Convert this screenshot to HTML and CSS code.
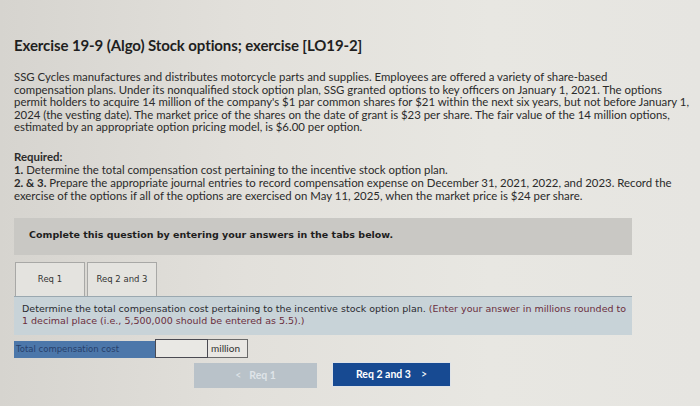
FILE: index.html
```html
<!DOCTYPE html>
<html>
<head>
<meta charset="utf-8">
<link rel="stylesheet" href="styles.css">
</head>
<body>
<div class="page">
  <h1 class="title">Exercise 19-9 (Algo) Stock options; exercise [LO19-2]</h1>
  <p class="intro">SSG Cycles manufactures and distributes motorcycle parts and supplies. Employees are offered a variety of share-based<br>compensation plans. Under its nonqualified stock option plan, SSG granted options to key officers on January 1, 2021. The options<br>permit holders to acquire 14 million of the company's $1 par common shares for $21 within the next six years, but not before January 1,<br>2024 (the vesting date). The market price of the shares on the date of grant is $23 per share. The fair value of the 14 million options,<br>estimated by an appropriate option pricing model, is $6.00 per option.</p>
  <div class="required">
    <div class="req-head">Required:</div>
    <div><b>1.</b> Determine the total compensation cost pertaining to the incentive stock option plan.</div>
    <div><b>2. &amp; 3.</b> Prepare the appropriate journal entries to record compensation expense on December 31, 2021, 2022, and 2023. Record the<br>exercise of the options if all of the options are exercised on May 11, 2025, when the market price is $24 per share.</div>
  </div>
  <div class="notice">Complete this question by entering your answers in the tabs below.</div>
  <div class="tabs">
    <div class="tab active">Req 1</div>
    <div class="tab">Req 2 and 3</div>
  </div>
  <div class="panel">Determine the total compensation cost pertaining to the incentive stock option plan. <span class="hint">(Enter your answer in millions rounded to<br>1 decimal place (i.e., 5,500,000 should be entered as 5.5).)</span></div>
  <div class="answer-row">
    <div class="label">Total compensation cost</div>
    <div class="input"></div>
    <div class="unit">million</div>
  </div>
  <div class="nav">
    <div class="btn prev"><span class="chev">&lt;</span> Req 1</div>
    <div class="btn next">Req 2 and 3 <span class="chev">&gt;</span></div>
  </div>
</div>
</body>
</html>
```

FILE: styles.css
```css
html, body {
  margin: 0;
  padding: 0;
}
body {
  width: 700px;
  height: 406px;
  overflow: hidden;
  background: linear-gradient(90deg, #d6d4cf 0%, #e2e0db 35%, #e8e7e2 70%, #e6e5e1 100%);
  font-family: Lato, "Liberation Sans", sans-serif;
  color: #2b2b2b;
}
.page {
  padding: 36px 0 0 14px;
  width: 650px;
}
.title {
  margin: 0;
  font-size: 15px;
  line-height: 18px;
  font-weight: 700;
  color: #1f1f1f;
  letter-spacing: -0.1px;
}
.intro {
  margin: 17px 0 0 0;
  font-size: 11.4px;
  line-height: 12.5px;
  white-space: nowrap;
}
.required {
  margin-top: 16px;
  font-size: 11.4px;
  line-height: 13px;
  white-space: nowrap;
}
.req-head {
  font-weight: 700;
}
.notice {
  margin-top: 16px;
  width: 618px;
  height: 37px;
  box-sizing: border-box;
  padding: 11px 0 0 15px;
  background: #c9c8c4;
  font-family: "DejaVu Sans", Verdana, sans-serif;
  font-weight: 700;
  font-size: 9.5px;
  color: #1e1e1e;
}
.tabs {
  display: flex;
  gap: 2px;
  margin-top: 7px;
  padding-left: 1px;
}
.tab {
  width: 70px;
  height: 34px;
  box-sizing: border-box;
  border: 1px solid #a8a8a6;
  border-bottom: none;
  background: #e4e3df;
  display: flex;
  align-items: center;
  justify-content: center;
  font-family: "DejaVu Sans", Verdana, sans-serif;
  font-size: 8.5px;
  color: #333;
}
.panel {
  width: 618px;
  box-sizing: border-box;
  height: 39px;
  padding: 6px 6px 0 8px;
  background: #c8d3d8;
  border-top: 1px solid #9aa8b0;
  font-family: "DejaVu Sans", Verdana, sans-serif;
  font-size: 9.5px;
  line-height: 12.5px;
  color: #2a2a30;
  white-space: nowrap;
}
.hint {
  color: #6b2e3d;
}
.answer-row {
  display: flex;
  margin-top: 4px;
  height: 19px;
}
.label {
  width: 141px;
  background: #4c77aa;
  color: #27406a;
  font-family: "DejaVu Sans", Verdana, sans-serif;
  font-size: 8.5px;
  line-height: 17px;
  padding-left: 2px;
  box-sizing: border-box;
  margin-top: 2px;
  height: 17px;
}
.input {
  width: 53px;
  height: 19px;
  box-sizing: border-box;
  border: 1px solid #4a4a52;
  background: #e9e8e4;
}
.unit {
  width: 40px;
  height: 19px;
  box-sizing: border-box;
  border: 1px solid #6a6a6a;
  border-left: none;
  background: #e9e7e3;
  font-family: Lato, "Liberation Sans", sans-serif;
  font-size: 10px;
  line-height: 17px;
  padding-left: 3px;
  color: #333;
}
.nav {
  display: flex;
  gap: 15px;
  margin: 4px 0 0 180px;
}
.btn {
  height: 25px;
  display: flex;
  align-items: center;
  justify-content: center;
  font-family: Lato, "Liberation Sans", sans-serif;
  font-weight: 700;
  font-size: 10.5px;
  box-sizing: border-box;
}
.prev {
  width: 123px;
  background: #b9c2c9;
  color: #dfe4e8;
  margin-top: 1px;
}
.prev .chev {
  margin-right: 8px;
  font-weight: 400;
}
.next {
  width: 119px;
  background: #174a92;
  color: #ffffff;
  border: 1px solid #dfe3e8;
}
.next .chev {
  margin-left: 10px;
  font-weight: 400;
}
```
